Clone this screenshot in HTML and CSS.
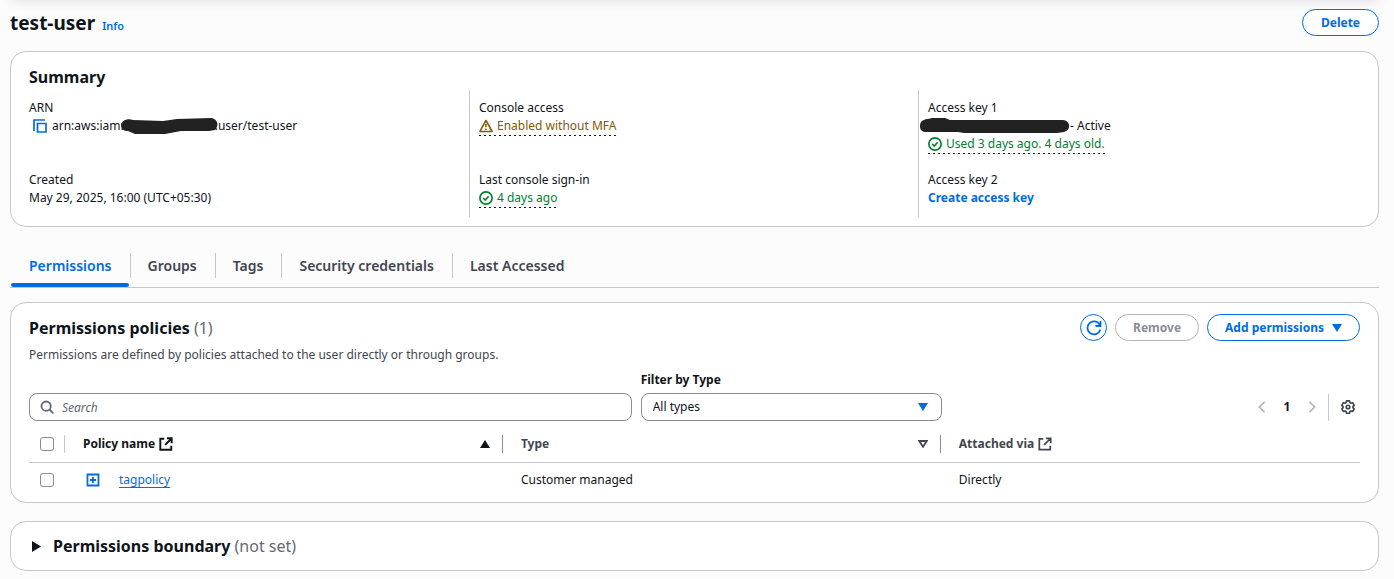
FILE: index.html
```html
<!DOCTYPE html>
<html lang="en">
<head>
<meta charset="utf-8">
<title>test-user</title>
<link rel="stylesheet" href="styles.css">
</head>
<body>
<main class="page">
  <header class="page-header">
    <h1 class="page-title">test-user</h1>
    <a class="info" href="#">Info</a>
    <button class="btn push" type="button">Delete</button>
  </header>

  <section class="card summary">
    <h2 class="card-title">Summary</h2>
    <div class="summary-grid">
      <dl class="summary-col">
        <div class="field">
          <dt>ARN</dt>
          <dd class="line arn">
            <button class="icon-btn" type="button" aria-label="Copy ARN"><svg class="icon" viewBox="0 0 14 14"><path d="M1 12V1h11M4.500 4.500h8.500v8.500h-8.500z" fill="none" stroke="currentColor" stroke-width="1.700"/></svg></button>
            <span>arn:aws:iam:</span><svg class="redacted redacted-arn" viewBox="0 0 97 18"><path d="M0 8C1 3 7 1 12 3L42 4 56 2 90 1C97 2 98 9 94 13L88 14 60 14 44 17 14 17 7 14C3 14 0 12 0 8z"/></svg><span>:user/test-user</span>
          </dd>
        </div>
        <div class="field">
          <dt>Created</dt>
          <dd>May 29, 2025, 16:00 (UTC+05:30)</dd>
        </div>
      </dl>
      <dl class="summary-col">
        <div class="field">
          <dt>Console access</dt>
          <dd><span class="status warning"><svg class="icon" viewBox="0 0 16 16"><path d="M8 1.700 15 14.200H1zM8 5.500v4M8 10.800v1.700" fill="none" stroke="currentColor" stroke-width="1.800" stroke-linejoin="round"/></svg>Enabled without MFA</span></dd>
        </div>
        <div class="field">
          <dt>Last console sign-in</dt>
          <dd><span class="status success"><svg class="icon" viewBox="0 0 16 16"><g fill="none" stroke="currentColor" stroke-width="1.900"><circle cx="8" cy="8" r="7"/><path d="m4.800 8 2.300 2.300 4-4.300"/></g></svg>4 days ago</span></dd>
        </div>
      </dl>
      <dl class="summary-col">
        <div class="field">
          <dt>Access key 1</dt>
          <dd class="line"><svg class="redacted redacted-key" viewBox="0 0 151 18"><path d="M1 9C1 4 5 2 9 2L13 1 26 1 31 3 144 3C152 4 152 13 145 15L138 16 45 16 39 15 8 15C3 15 1 13 1 9z"/></svg><span>- Active</span></dd>
          <dd><span class="status success"><svg class="icon" viewBox="0 0 16 16"><g fill="none" stroke="currentColor" stroke-width="1.900"><circle cx="8" cy="8" r="7"/><path d="m4.800 8 2.300 2.300 4-4.300"/></g></svg>Used 3 days ago. 4 days old.</span></dd>
        </div>
        <div class="field">
          <dt>Access key 2</dt>
          <dd><a class="strong-link" href="#">Create access key</a></dd>
        </div>
      </dl>
    </div>
  </section>

  <nav class="tabs" role="tablist">
    <button class="tab active" type="button" role="tab" aria-selected="true">Permissions</button>
    <button class="tab" type="button" role="tab">Groups</button>
    <button class="tab" type="button" role="tab">Tags</button>
    <button class="tab" type="button" role="tab">Security credentials</button>
    <button class="tab" type="button" role="tab">Last Accessed</button>
  </nav>

  <section class="card policies">
    <div class="policies-header">
      <div>
        <h2 class="card-title">Permissions policies <span class="counter">(1)</span></h2>
        <p class="description">Permissions are defined by policies attached to the user directly or through groups.</p>
      </div>
      <div class="actions">
        <button class="btn round" type="button" aria-label="Refresh"><svg class="icon large" viewBox="0 0 16 16"><path d="M14.300 9.500A6.500 6.500 0 1 1 13.600 4.600M14.500 1v5h-5" fill="none" stroke="currentColor" stroke-width="1.800"/></svg></button>
        <button class="btn" type="button" disabled>Remove</button>
        <button class="btn" type="button">Add permissions <svg class="caret" viewBox="0 0 10 8"><path d="M0 0h10L5 8z" fill="currentColor"/></svg></button>
      </div>
    </div>

    <div class="toolbar">
      <div class="filters">
        <div class="search">
          <svg class="icon search-icon" viewBox="0 0 16 16"><g fill="none" stroke="currentColor" stroke-width="2.100"><circle cx="7" cy="7" r="5.300"/><path d="m11 11 4.300 4.300"/></g></svg>
          <input class="control" type="text" placeholder="Search" aria-label="Search">
        </div>
        <div class="type-filter">
          <label for="type">Filter by Type</label>
          <div class="select-wrap">
            <select class="control" id="type"><option>All types</option></select>
            <svg class="caret" viewBox="0 0 10 8"><path d="M0 0h10L5 8z" fill="currentColor"/></svg>
          </div>
        </div>
      </div>
      <div class="pagination">
        <button class="icon-btn muted" type="button" aria-label="Previous page"><svg class="icon" viewBox="0 0 16 16"><path d="m11 2-6 6 6 6" fill="none" stroke="currentColor" stroke-width="2"/></svg></button>
        <button class="icon-btn page-number" type="button">1</button>
        <button class="icon-btn muted" type="button" aria-label="Next page"><svg class="icon" viewBox="0 0 16 16"><path d="m5 2 6 6-6 6" fill="none" stroke="currentColor" stroke-width="2"/></svg></button>
        <div class="settings">
          <button class="icon-btn" type="button" aria-label="Preferences"><svg class="icon" viewBox="0 0 16 16"><g fill="none" stroke="currentColor" stroke-width="1.900" stroke-linejoin="round"><path d="M6.300 1h3.400l.5 2 1.200.7 2-.6 1.700 3-1.500 1.400v1.200l1.500 1.400-1.700 3-2-.6-1.200.7-.5 1.900H6.300l-.5-1.900-1.200-.7-2 .6-1.700-3 1.500-1.400V7.500L.9 6.100l1.700-3 2 .6L5.800 3z"/><circle cx="8" cy="8" r="2"/></g></svg></button>
        </div>
      </div>
    </div>

    <table class="table">
      <thead>
        <tr>
          <th class="check"><input type="checkbox" aria-label="Select all policies"></th>
          <th class="wide sorted"><div class="th-content"><span class="th-label">Policy name <svg class="icon" viewBox="0 0 16 16"><path d="M6 2H1.500v12.500H14V10M9 1.500h5.500V7M14 2 7 9" fill="none" stroke="currentColor" stroke-width="2.200"/></svg></span><svg class="sort" viewBox="0 0 10 8"><path d="M5 0 10 8H0z" fill="currentColor"/></svg></div></th>
          <th class="wide"><div class="th-content"><span class="th-label">Type</span><svg class="sort" viewBox="0 0 10 8"><path d="M1.200 1h7.600L5 6.800z" fill="none" stroke="currentColor" stroke-width="1.800"/></svg></div></th>
          <th><div class="th-content"><span class="th-label">Attached via <svg class="icon" viewBox="0 0 16 16"><path d="M6 2H1.500v12.500H14V10M9 1.500h5.500V7M14 2 7 9" fill="none" stroke="currentColor" stroke-width="2"/></svg></span></div></th>
        </tr>
      </thead>
      <tbody>
        <tr>
          <td class="check"><input type="checkbox" aria-label="Select tagpolicy"></td>
          <td><div class="policy"><button class="icon-btn" type="button" aria-label="Expand tagpolicy"><svg class="icon" viewBox="0 0 14 14"><path d="M1.500 1.500h11v11h-11zM7 4v6M4 7h6" fill="none" stroke="currentColor" stroke-width="1.800"/></svg></button><a href="#">tagpolicy</a></div></td>
          <td>Customer managed</td>
          <td>Directly</td>
        </tr>
      </tbody>
    </table>
  </section>

  <section class="card boundary">
    <button class="expander" type="button" aria-expanded="false">
      <svg class="caret-right" viewBox="0 0 9 11"><path d="M0 0 9 5.500 0 11z" fill="currentColor"/></svg>
      <span class="card-title">Permissions boundary <span class="counter">(not set)</span></span>
    </button>
  </section>
</main>
</body>
</html>
```
FILE: styles.css
```css
* { box-sizing: border-box; }

body {
  margin: 0;
  background: #fcfcfd;
  color: #0f141a;
  font: 12px/18px "Noto Sans", "Open Sans", sans-serif;
}

body::before {
  content: "";
  position: absolute;
  top: -10px;
  left: 12px;
  right: 16px;
  height: 10px;
  box-shadow: 0 0 12px 1px rgba(0, 7, 22, 0.12);
}

h1, h2, p, dl, dd { margin: 0; }
button, input, select { font: inherit; color: inherit; }
button { cursor: pointer; }
svg { flex: none; }

.page { padding: 9px 15px 9px 10px; }

.page-header {
  display: flex;
  align-items: baseline;
  gap: 7px;
  height: 27px;
}
.page-title { font-size: 19px; line-height: 29px; }
.info { color: #006ce0; font-size: 11px; font-weight: 600; text-decoration: none; }
.push { margin-left: auto; align-self: center; }

.card {
  background: #fff;
  border: 1px solid #c6c6cd;
  border-radius: 16px;
}
.card-title { font-size: 16px; line-height: 22px; font-weight: 700; }
.counter { color: #656871; font-weight: 400; }

.btn {
  display: inline-flex;
  align-items: center;
  justify-content: center;
  gap: 8px;
  height: 27px;
  padding: 0 17px;
  border: 1px solid #006ce0;
  border-radius: 14px;
  background: #fff;
  color: #006ce0;
  font-weight: 700;
}
.btn.push { padding: 0 18px; }
.btn:disabled { border-color: #b4b4bb; color: #8c8c94; }
.btn.round { width: 27px; padding: 0; }

.icon { width: 14px; height: 14px; display: block; }
.icon.large { width: 16px; height: 16px; }
.caret { width: 10px; height: 8px; }
.icon-btn {
  display: inline-flex;
  align-items: center;
  justify-content: center;
  padding: 0;
  border: 0;
  background: none;
  color: #006ce0;
}

.summary { margin-top: 15px; padding: 14px 11px 9px 9px; }
.summary .card-title { padding-left: 9px; }
.summary-grid {
  display: grid;
  grid-template-columns: repeat(3, 1fr);
  margin-top: 2px;
}
.summary-col {
  display: flex;
  flex-direction: column;
  gap: 18px;
  padding: 9px 9px 10px;
}
.summary-col + .summary-col { border-left: 1px solid #c6c6cd; }
.field:first-child { min-height: 54px; }
.field dd { height: 18px; }
.line { display: flex; align-items: center; }
.arn .icon-btn { margin: 0 5px 0 4px; }
.redacted { height: 18px; fill: #222; }
.redacted-arn { width: 97px; margin-left: -3px; margin-right: -3px; }
.redacted-key { width: 151px; margin-left: -9px; }
.status {
  display: inline-flex;
  align-items: center;
  gap: 4px;
  height: 19px;
  padding-bottom: 1px;
  background: repeating-linear-gradient(90deg, #0f141a 0 2px, transparent 2px 5px) bottom / 100% 1px no-repeat;
}
.warning { color: #855900; }
.success { color: #00802f; }
.strong-link { color: #006ce0; font-weight: 700; text-decoration: none; }

.tabs {
  display: flex;
  margin-top: 17px;
  padding-left: 1px;
  border-bottom: 1px solid #c6c6cd;
}
.tab {
  position: relative;
  height: 43px;
  padding: 0 18px;
  border: 0;
  background: none;
  color: #424650;
  font-size: 14px;
  font-weight: 600;
}
.tab + .tab::before {
  content: "";
  position: absolute;
  left: 0;
  top: 9px;
  height: 25px;
  border-left: 1px solid #c6c6cd;
}
.tab.active { color: #006ce0; }
.tab.active::after {
  content: "";
  position: absolute;
  left: 0;
  right: 1px;
  bottom: 0;
  height: 4px;
  border-radius: 2px;
  background: #006ce0;
}

.policies { margin-top: 14px; padding: 11px 18px 4px; }
.policies-header { display: flex; justify-content: space-between; align-items: flex-start; }
.policies-header .card-title { line-height: 28px; }
.description { margin-top: 4px; color: #424650; }
.actions { display: flex; gap: 8px; }

.toolbar { display: flex; justify-content: space-between; align-items: flex-end; margin-top: 7px; }
.filters {
  flex: 0 1 913px;
  display: grid;
  grid-template-columns: 2fr 1fr;
  gap: 9px;
  align-items: end;
}
.type-filter label { display: block; margin-bottom: 4px; font-weight: 700; }
.search, .select-wrap { position: relative; }
.control {
  display: block;
  width: 100%;
  height: 28px;
  padding: 0 11px;
  border: 1px solid #8c8c94;
  border-radius: 8px;
  background: #fff;
  appearance: none;
}
.search .control { padding-left: 32px; }
.control::placeholder { color: #656871; font-style: italic; opacity: 1; }
.search-icon { position: absolute; left: 11px; top: 7px; color: #656871; }
.select-wrap .caret { position: absolute; right: 14px; top: 10px; color: #006ce0; pointer-events: none; }

.pagination { display: flex; align-items: center; height: 28px; gap: 14px; padding-right: 5px; }
.muted { color: #b4b4bb; }
.page-number { width: 8px; color: #0f141a; font-weight: 700; }
.settings {
  display: flex;
  align-items: center;
  height: 27px;
  margin-left: -5px;
  padding-left: 12px;
  border-left: 1px solid #c6c6cd;
}
.settings .icon-btn { color: #424650; }

.table { width: 100%; margin-top: 6px; border-collapse: collapse; table-layout: fixed; }
.table th, .table td { height: 36px; padding: 0 0 0 18px; text-align: left; }
.table th { height: 35px; border-bottom: 1px solid #c6c6cd; color: #424650; }
.table .check { width: 36px; padding: 0 0 0 11px; }
.table .wide { width: 32.9%; }
.table .sorted { color: #0f141a; }
.table input {
  display: block;
  width: 14px;
  height: 14px;
  margin: 0;
  appearance: none;
  border: 1px solid #8c8c94;
  border-radius: 3px;
  background: #fff;
}
.th-content {
  display: flex;
  align-items: center;
  justify-content: space-between;
  height: 18px;
  padding-right: 12px;
}
th.wide .th-content { border-right: 1px solid #8c8c94; }
th.check { background: linear-gradient(#c6c6cd, #c6c6cd) right center / 1px 18px no-repeat; }
.th-label { display: flex; align-items: center; gap: 4px; }
.sort { width: 10px; height: 8px; }
.policy { display: flex; align-items: center; gap: 19px; padding-left: 3px; }
.policy a { color: #006ce0; text-underline-offset: 3px; }

.boundary { margin-top: 18px; }
.expander {
  display: flex;
  align-items: center;
  gap: 12px;
  width: 100%;
  height: 48px;
  padding: 0 21px;
  border: 0;
  background: none;
  text-align: left;
}
.caret-right { width: 9px; height: 11px; }
```
